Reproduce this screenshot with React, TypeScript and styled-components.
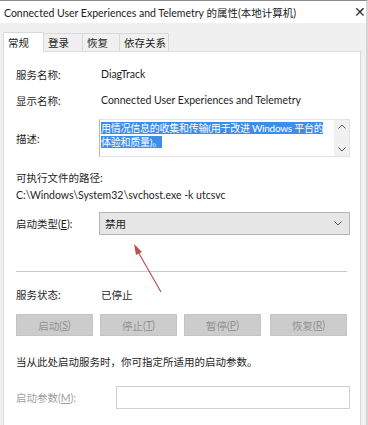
import React from 'react';
import styled, { createGlobalStyle } from 'styled-components';

const GlobalStyle = createGlobalStyle`
  html, body {
    margin: 0;
    padding: 0;
    background: #f0f0f0;
  }
  body {
    font-family: Lato, 'Noto Sans CJK SC', sans-serif;
    font-size: 10.5px;
    color: #1e1e1e;
  }
`;

const Window = styled.div`
  position: relative;
  width: 368px;
  height: 425px;
  overflow: hidden;
  background: #f0f0f0;
  border-top: 1px solid #8a8a8a;
  border-right: 2px solid #d6d6d6;
  box-sizing: border-box;
  display: flex;
  flex-direction: column;
`;

const TitleBar = styled.div`
  height: 22px;
  background: #ffffff;
  display: flex;
  align-items: center;
  justify-content: space-between;
  padding: 0 0 0 4px;
  font-size: 10.5px;
  color: #222;
`;

const Close = styled.span`
  font-size: 14px;
  color: #333;
  line-height: 1;
  margin-top: -1px;
`;

const Body = styled.div`
  flex: 1;
  padding: 8px 5px 0 3px;
  display: flex;
  flex-direction: column;
`;

const TabStrip = styled.div`
  display: flex;
  align-items: flex-end;
  height: 20px;
`;

const Tab = styled.div<{ $active?: boolean; $w: number }>`
  width: ${p => p.$w}px;
  height: ${p => (p.$active ? '20px' : '18px')};
  display: flex;
  align-items: center;
  padding-left: 4px;
  background: ${p => (p.$active ? '#ffffff' : '#f0f0f0')};
  border: 1px solid #d9d9d9;
  border-bottom: none;
  border-left-width: ${p => (p.$active ? '1px' : '0')};
  box-sizing: border-box;
  color: #222;
  position: relative;
  z-index: ${p => (p.$active ? 1 : 0)};
  margin-bottom: ${p => (p.$active ? '-1px' : '0')};
`;

const Panel = styled.div`
  flex: 1;
  background: #ffffff;
  border: 1px solid #d9d9d9;
  border-bottom: none;
  padding: 9px 10px 0 12px;
  display: flex;
  flex-direction: column;
`;

const Row = styled.div<{ $h?: number; $top?: number }>`
  display: flex;
  align-items: center;
  height: ${p => p.$h ?? 26}px;
  margin-top: ${p => p.$top ?? 0}px;
`;

const Label = styled.div<{ $w?: number; $muted?: boolean }>`
  width: ${p => p.$w ?? 83}px;
  flex-shrink: 0;
  color: ${p => (p.$muted ? '#a0a0a0' : '#1e1e1e')};
`;

const Value = styled.div`
  padding-left: 2px;
`;

const TextArea = styled.div`
  width: 251px;
  height: 38px;
  border: 1px solid #e3e3e3;
  border-left: 1px solid #b8b8b8;
  box-sizing: border-box;
  display: flex;
  background: #fff;
`;

const TextContent = styled.div`
  flex: 1;
  padding: 1px 1px;
  line-height: 14px;
  font-size: 10px;
  letter-spacing: -0.25px;
  white-space: nowrap;
  overflow: hidden;
`;

const Selected = styled.span`
  background: #3d8ee8;
  color: #fff;
`;

const ScrollBar = styled.div`
  width: 15px;
  background: #f0f0f0;
  display: flex;
  flex-direction: column;
  justify-content: space-between;
  align-items: center;
  padding: 4px 0;
  box-sizing: border-box;
`;

const Line = styled.div<{ $top?: number }>`
  margin-top: ${p => p.$top ?? 0}px;
  line-height: 16px;
`;

const Select = styled.div`
  width: 251px;
  height: 23px;
  background: #e6e6e6;
  border: 1px solid #b5b5b5;
  box-sizing: border-box;
  display: flex;
  align-items: center;
  justify-content: space-between;
  padding: 0 7px 0 5px;
`;

const Separator = styled.div`
  height: 1px;
  background: #c8c8c8;
  margin: 36px 3px 0 0;
`;

const ButtonRow = styled.div`
  display: flex;
  gap: 7px;
  margin-top: 10px;
`;

const Button = styled.div`
  width: 77px;
  height: 22px;
  background: #cccccc;
  border: 1px solid #c4c4c4;
  box-sizing: border-box;
  display: flex;
  align-items: center;
  justify-content: center;
  color: #929292;
  &:nth-child(4) {
    margin-left: 2px;
  }
`;

const Input = styled.div`
  width: 234px;
  height: 23px;
  border: 1px solid #d0d0d0;
  box-sizing: border-box;
  background: #fff;
`;

const Arrow = styled.svg`
  position: absolute;
  left: 128px;
  top: 239px;
`;

const Chevron = ({ up }: { up?: boolean }) => (
  <svg width="8" height="5" viewBox="0 0 8 5">
    <path
      d={up ? 'M0.5 4.5 L4 1 L7.5 4.5' : 'M0.5 0.5 L4 4 L7.5 0.5'}
      fill="none"
      stroke="#555"
      strokeWidth="1"
    />
  </svg>
);

export default function App() {
  return (
    <>
      <GlobalStyle />
      <Window>
        <TitleBar>
          <span>Connected User Experiences and Telemetry 的属性(本地计算机)</span>
          <Close>✕</Close>
        </TitleBar>
        <Body>
          <TabStrip>
            <Tab $active $w={41}>常规</Tab>
            <Tab $w={39}>登录</Tab>
            <Tab $w={37}>恢复</Tab>
            <Tab $w={49}>依存关系</Tab>
          </TabStrip>
          <Panel>
            <Row>
              <Label>服务名称:</Label>
              <Value>DiagTrack</Value>
            </Row>
            <Row>
              <Label>显示名称:</Label>
              <Value>Connected User Experiences and Telemetry</Value>
            </Row>
            <Row $h={38} $top={6}>
              <Label>描述:</Label>
              <TextArea>
                <TextContent>
                  <Selected>用情况信息的收集和传输(用于改进 Windows 平台的</Selected>
                  <br />
                  <Selected>体验和质量)。</Selected>
                </TextContent>
                <ScrollBar>
                  <Chevron up />
                  <Chevron />
                </ScrollBar>
              </TextArea>
            </Row>
            <Line $top={13}>可执行文件的路径:</Line>
            <Line $top={1}>C:\Windows\System32\svchost.exe -k utcsvc</Line>
            <Row $h={23} $top={9}>
              <Label>启动类型(<u>E</u>):</Label>
              <Select>
                <span>禁用</span>
                <Chevron />
              </Select>
            </Row>
            <Separator />
            <Row $h={20} $top={12}>
              <Label>服务状态:</Label>
              <Value>已停止</Value>
            </Row>
            <ButtonRow>
              <Button>启动(<u>S</u>)</Button>
              <Button>停止(<u>T</u>)</Button>
              <Button>暂停(<u>P</u>)</Button>
              <Button>恢复(<u>R</u>)</Button>
            </ButtonRow>
            <Line $top={18}>当从此处启动服务时，你可指定所适用的启动参数。</Line>
            <Row $h={23} $top={16}>
              <Label $w={100} $muted>启动参数(<u>M</u>):</Label>
              <Input />
            </Row>
          </Panel>
        </Body>
        <Arrow width="40" height="55" viewBox="0 0 40 55">
          <line x1="33" y1="52" x2="9" y2="10" stroke="#c0504d" strokeWidth="1.2" />
          <path d="M6 4 L14 12 L8 15 Z" fill="#c0504d" />
        </Arrow>
      </Window>
    </>
  );
}
